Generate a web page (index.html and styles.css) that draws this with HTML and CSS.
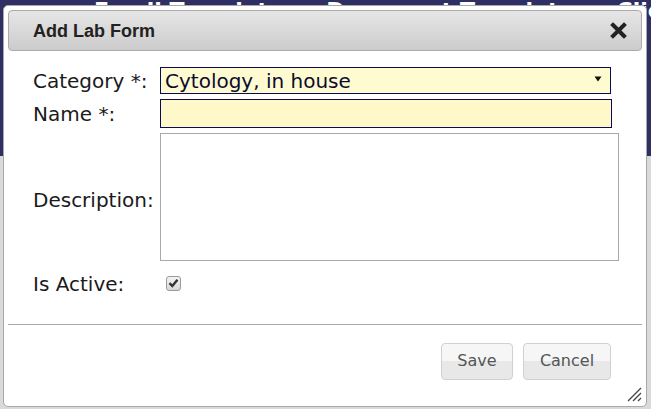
FILE: index.html
```html
<!DOCTYPE html>
<html>
<head>
<meta charset="utf-8">
<link rel="stylesheet" href="styles.css">
</head>
<body>
<div class="page">
  <div class="topnav">
    <span>Email Templates</span>
    <span>Document Templates</span>
    <span>Clients</span>
  </div>
  <div class="lower"></div>
</div>

<div class="dialog">
  <div class="titlebar">
    <span class="title">Add Lab Form</span>
    <svg class="close" width="17" height="17" viewBox="0 0 17 17">
      <path d="M3 3 L14 14 M14 3 L3 14" stroke="#222" stroke-width="4" stroke-linecap="square"/>
    </svg>
  </div>
  <div class="content">
    <div class="form">
      <label class="lbl">Category <span class="req">*</span>:</label>
      <div class="field select">
        <span>Cytology, in house</span>
        <svg width="8" height="6" viewBox="0 0 8 6"><path d="M0.5 0.5 L7.5 0.5 L4 5.5 Z" fill="#111"/></svg>
      </div>
      <label class="lbl">Name <span class="req">*</span>:</label>
      <div class="field text"></div>
      <label class="lbl desc">Description:</label>
      <div class="textarea"></div>
      <label class="lbl active">Is Active:</label>
      <div class="chkcell">
        <span class="chk">
          <svg width="11" height="10" viewBox="0 0 11 10"><path d="M1.5 5.2 L4.3 8 L9.5 1.8" fill="none" stroke="#333" stroke-width="2.4"/></svg>
        </span>
      </div>
    </div>
  </div>
  <div class="buttonpane">
    <button class="btn save">Save</button>
    <button class="btn cancel">Cancel</button>
  </div>
  <svg class="grip" width="16" height="16" viewBox="0 0 16 16">
    <path d="M2 15 L15 2 M7 15 L15 7 M12 15 L15 12" stroke="#444" stroke-width="1.3"/>
  </svg>
</div>
</body>
</html>
```

FILE: styles.css
```css
html, body {
  margin: 0;
  padding: 0;
}
body {
  width: 651px;
  height: 409px;
  overflow: hidden;
  font-family: "DejaVu Sans", Verdana, sans-serif;
  background: #dcdcdc;
}
.page {
  height: 409px;
}
.topnav {
  height: 156px;
  background: #2f2f63;
  color: #fff;
  font-family: "DejaVu Sans", sans-serif;
  font-weight: bold;
  font-size: 22px;
  display: flex;
  gap: 30px;
  padding-left: 94px;
  line-height: 22px;
  white-space: nowrap;
  overflow: hidden;
}
.lower {
  height: 253px;
  background: #dadada;
}
.dialog {
  position: absolute;
  left: 3px;
  top: 5px;
  width: 634px;
  height: 392px;
  padding: 4px;
  background: #fff;
  border: 1px solid #a8a8a8;
  border-radius: 5px;
  display: flex;
  flex-direction: column;
}
.titlebar {
  height: 39px;
  border: 1px solid #ababab;
  border-radius: 4px;
  background: linear-gradient(#e6e6e6, #cccccc);
  display: flex;
  align-items: center;
  justify-content: space-between;
  padding: 0 14px 0 24px;
}
.title {
  font-family: "Liberation Sans", Arial, sans-serif;
  font-weight: bold;
  font-size: 18px;
  color: #222;
  padding-top: 1px;
}
.close {
  display: block;
}
.content {
  padding: 16px 0 0 25px;
  height: 256px;
}
.form {
  display: grid;
  grid-template-columns: 127px auto;
  grid-template-rows: 27px 29px 128px 32px;
  row-gap: 5px;
  align-items: center;
}
.lbl {
  font-size: 20px;
  color: #1a1a1a;
  white-space: nowrap;
}
.desc {
  padding-top: 5px;
}
.active {
  padding-top: 3px;
}
.req {
  color: #1a1a1a;
}
.field {
  box-sizing: border-box;
  border: 1px solid #0a0a55;
  background: #fffbd1;
}
.select {
  width: 451px;
  height: 27px;
  display: flex;
  align-items: center;
  justify-content: space-between;
  padding: 0 8px 0 4px;
  font-size: 20px;
  color: #0b0b2e;
}
.select svg {
  display: block;
  margin-top: -3px;
}
.text {
  width: 452px;
  height: 29px;
  background: #fff8c9;
}
.textarea {
  box-sizing: border-box;
  width: 459px;
  height: 128px;
  border: 1px solid #a9a9a9;
  background: #fff;
}
.chkcell {
  padding-left: 6px;
  padding-top: 2px;
}
.chk {
  box-sizing: border-box;
  width: 15px;
  height: 15px;
  border: 1px solid #9a9a9a;
  border-radius: 3px;
  background: linear-gradient(#f4f4f4, #d8d8d8);
  display: flex;
  align-items: center;
  justify-content: center;
}
.buttonpane {
  border-top: 1px solid #aaaaaa;
  margin-top: 1px;
  padding: 18px 31px 0 0;
  display: flex;
  justify-content: flex-end;
  gap: 10px;
}
.btn {
  box-sizing: border-box;
  height: 37px;
  border: 1px solid #d0d0d0;
  border-radius: 4px;
  background: linear-gradient(#f6f6f6 50%, #e8e8e8 50%);
  color: #555;
  font-family: "DejaVu Sans", Verdana, sans-serif;
  font-size: 16px;
  padding: 0 0 2px 0;
}
.save {
  width: 72px;
}
.cancel {
  width: 88px;
}
.grip {
  position: absolute;
  right: 4px;
  bottom: 4px;
}
```
